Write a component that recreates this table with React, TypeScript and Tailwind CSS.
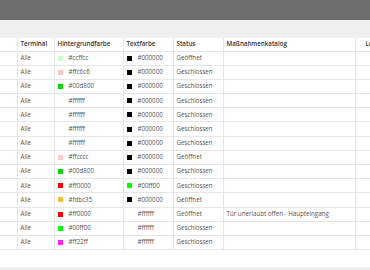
import React from "react";

const rows: [string, string, string, string][] = [
  ["#ccffcc", "#000000", "Geöffnet", ""],
  ["#ffc6c6", "#000000", "Geschlossen", ""],
  ["#00d800", "#000000", "Geschlossen", ""],
  ["#ffffff", "#000000", "Geschlossen", ""],
  ["#ffffff", "#000000", "Geschlossen", ""],
  ["#ffffff", "#000000", "Geschlossen", ""],
  ["#ffffff", "#000000", "Geschlossen", ""],
  ["#ffcccc", "#000000", "Geöffnet", ""],
  ["#00d800", "#000000", "Geschlossen", ""],
  ["#ff0000", "#00ff00", "Geschlossen", ""],
  ["#fdbc35", "#000000", "Geöffnet", ""],
  ["#ff0000", "#ffffff", "Geöffnet", "Tür unerlaubt offen - Haupteingang"],
  ["#00ff00", "#ffffff", "Geschlossen", ""],
  ["#ff22ff", "#ffffff", "Geschlossen", ""],
];

function Swatch({ color, label }: { color: string; label: string }) {
  return (
    <div className="flex items-center gap-[6px]">
      <span className="block w-[5px] h-[5px] shrink-0" style={{ backgroundColor: color }} />
      <span>{label}</span>
    </div>
  );
}

export default function App() {
  return (
    <div
      className="w-[370px] h-[270px] overflow-hidden bg-white flex flex-col"
      style={{ fontFamily: '"Open Sans", "Liberation Sans", sans-serif' }}
    >
      <div className="h-[20px] shrink-0 bg-[#6e6e6e]" />
      <div className="h-[18px] shrink-0 bg-[#efefef]" />
      <table className="table-fixed border-collapse w-[400px] text-[6.2px] leading-none text-[#555]">
        <colgroup>
          <col className="w-[17px]" />
          <col className="w-[37px]" />
          <col className="w-[69px]" />
          <col className="w-[50px]" />
          <col className="w-[50px]" />
          <col className="w-[132px]" />
          <col className="w-[45px]" />
        </colgroup>
        <thead>
          <tr className="h-[13px] text-[#333] font-semibold text-left">
            <th className="border-b border-[#e6e6e6] px-[3px] font-semibold"></th>
            <th className="border-b border-l border-[#e6e6e6] px-[3px] font-semibold text-left">Terminal</th>
            <th className="border-b border-l border-[#e6e6e6] px-[3px] font-semibold text-left">Hintergrundfarbe</th>
            <th className="border-b border-l border-[#e6e6e6] px-[3px] font-semibold text-left">Textfarbe</th>
            <th className="border-b border-l border-[#e6e6e6] px-[3px] font-semibold text-left">Status</th>
            <th className="border-b border-l border-[#e6e6e6] px-[3px] font-semibold text-left">Maßnahmenkatalog</th>
            <th className="border-b border-l border-[#e6e6e6] px-[10px] font-semibold text-left">Log</th>
          </tr>
        </thead>
        <tbody>
          {rows.map((r, i) => (
            <tr key={i} className="h-[14.2px]">
              <td className="border-b border-[#e6e6e6] px-[3px]"></td>
              <td className="border-b border-l border-[#e6e6e6] px-[3px]">Alle</td>
              <td className="border-b border-l border-[#e6e6e6] px-[3px]">
                <Swatch color={r[0]} label={r[0]} />
              </td>
              <td className="border-b border-l border-[#e6e6e6] px-[3px]">
                <Swatch color={r[1]} label={r[1]} />
              </td>
              <td className="border-b border-l border-[#e6e6e6] px-[3px]">{r[2]}</td>
              <td className="border-b border-l border-[#e6e6e6] px-[3px]">{r[3]}</td>
              <td className="border-b border-l border-[#e6e6e6] px-[3px]"></td>
            </tr>
          ))}
        </tbody>
      </table>
      <div className="flex-1" />
      <div className="h-[3px] shrink-0 bg-[#efefef]" />
    </div>
  );
}
